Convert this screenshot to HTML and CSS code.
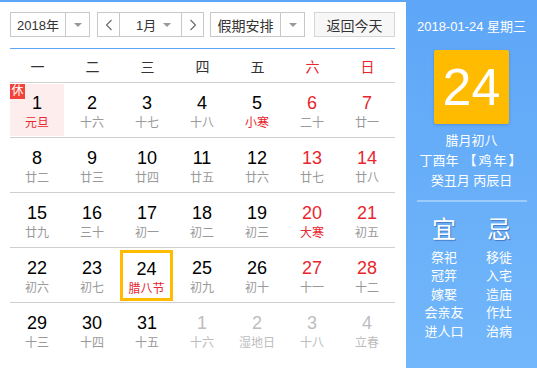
FILE: index.html
```html
<!doctype html>
<html lang="zh-CN">
  <head>
    <meta charset="utf-8" />
    <title>万年历</title>
    <link rel="stylesheet" href="styles.css">
  </head>
  <body>
    <div class="calendar">
      <div class="main">
        <div class="toolbar">
          <div class="select year">
            <span class="select-text">2018年</span>
            <span class="select-arrow"><i class="caret"></i></span>
          </div>
          <div class="month-group">
            <span class="nav"><svg width="8" height="12" viewBox="0 0 8 12"><polyline points="6.5,1 1.5,6 6.5,11" fill="none" stroke="#666" stroke-width="1.1"/></svg></span>
            <span class="month">
              <span class="select-text">1月</span>
              <i class="caret"></i>
            </span>
            <span class="nav"><svg width="8" height="12" viewBox="0 0 8 12"><polyline points="1.5,1 6.5,6 1.5,11" fill="none" stroke="#666" stroke-width="1.1"/></svg></span>
          </div>
          <div class="select holiday">
            <span class="select-text">假期安排</span>
            <span class="select-arrow"><i class="caret"></i></span>
          </div>
          <button class="today-btn">返回今天</button>
        </div>

        <div class="weekdays">
          <span>一</span><span>二</span><span>三</span><span>四</span><span>五</span>
          <span class="red">六</span><span class="red">日</span>
        </div>

        <div class="week">
          <div class="day rest"><span class="badge">休</span><b>1</b><em class="term">元旦</em></div>
          <div class="day"><b>2</b><em>十六</em></div>
          <div class="day"><b>3</b><em>十七</em></div>
          <div class="day"><b>4</b><em>十八</em></div>
          <div class="day"><b>5</b><em class="term">小寒</em></div>
          <div class="day weekend"><b>6</b><em>二十</em></div>
          <div class="day weekend"><b>7</b><em>廿一</em></div>
        </div>
        <div class="week">
          <div class="day"><b>8</b><em>廿二</em></div>
          <div class="day"><b>9</b><em>廿三</em></div>
          <div class="day"><b>10</b><em>廿四</em></div>
          <div class="day"><b>11</b><em>廿五</em></div>
          <div class="day"><b>12</b><em>廿六</em></div>
          <div class="day weekend"><b>13</b><em>廿七</em></div>
          <div class="day weekend"><b>14</b><em>廿八</em></div>
        </div>
        <div class="week">
          <div class="day"><b>15</b><em>廿九</em></div>
          <div class="day"><b>16</b><em>三十</em></div>
          <div class="day"><b>17</b><em>初一</em></div>
          <div class="day"><b>18</b><em>初二</em></div>
          <div class="day"><b>19</b><em>初三</em></div>
          <div class="day weekend"><b>20</b><em class="term">大寒</em></div>
          <div class="day weekend"><b>21</b><em>初五</em></div>
        </div>
        <div class="week">
          <div class="day"><b>22</b><em>初六</em></div>
          <div class="day"><b>23</b><em>初七</em></div>
          <div class="day today"><b>24</b><em class="term">腊八节</em></div>
          <div class="day"><b>25</b><em>初九</em></div>
          <div class="day"><b>26</b><em>初十</em></div>
          <div class="day weekend"><b>27</b><em>十一</em></div>
          <div class="day weekend"><b>28</b><em>十二</em></div>
        </div>
        <div class="week last">
          <div class="day"><b>29</b><em>十三</em></div>
          <div class="day"><b>30</b><em>十四</em></div>
          <div class="day"><b>31</b><em>十五</em></div>
          <div class="day other"><b>1</b><em>十六</em></div>
          <div class="day other"><b>2</b><em>湿地日</em></div>
          <div class="day other"><b>3</b><em>十八</em></div>
          <div class="day other"><b>4</b><em>立春</em></div>
        </div>
      </div>

      <aside class="side">
        <div class="side-date">2018-01-24 星期三</div>
        <div class="big-day">24</div>
        <div class="lunar">
          <p>腊月初八</p>
          <p>丁酉年<span class="zodiac">【鸡年】</span></p>
          <p>癸丑月 丙辰日</p>
        </div>
        <hr class="divider" />
        <div class="almanac">
          <ul>
            <li class="head">宜</li>
            <li>祭祀</li>
            <li>冠笄</li>
            <li>嫁娶</li>
            <li>会亲友</li>
            <li>进人口</li>
          </ul>
          <ul>
            <li class="head">忌</li>
            <li>移徙</li>
            <li>入宅</li>
            <li>造庙</li>
            <li>作灶</li>
            <li>治病</li>
          </ul>
        </div>
      </aside>
    </div>
  </body>
</html>
```

FILE: styles.css
```css
*, *::before, *::after {
  box-sizing: border-box;
}

html, body {
  margin: 0;
  padding: 0;
}

body {
  font-family: "Liberation Sans", "Noto Sans CJK SC", sans-serif;
  color: #333;
  background: #fff;
}

.calendar {
  display: flex;
  width: 537px;
  height: 368px;
}

.main {
  width: 406px;
  padding: 10px 11px 0 10px;
  border-top: 2px solid #5ea6f7;
}

/* toolbar */
.toolbar {
  display: flex;
  height: 25px;
  font-size: 13px;
}

.select,
.month-group {
  display: flex;
  border: 1px solid #c8c8c8;
  background: #fff;
}

.select-text {
  display: flex;
  align-items: center;
  justify-content: center;
}

.select-arrow {
  display: flex;
  align-items: center;
  justify-content: center;
  width: 24px;
  border-left: 1px solid #c8c8c8;
}

.caret {
  display: block;
  width: 0;
  height: 0;
  border-left: 4px solid transparent;
  border-right: 4px solid transparent;
  border-top: 4px solid #999;
}

.year {
  width: 80px;
}

.year .select-text {
  flex: 1;
}

.month-group {
  margin-left: 7px;
  width: 107px;
}

.nav {
  display: flex;
  align-items: center;
  justify-content: center;
  width: 22px;
}

.nav:first-child {
  border-right: 1px solid #c8c8c8;
}

.nav:last-child {
  border-left: 1px solid #c8c8c8;
}

.month {
  flex: 1;
  display: flex;
  align-items: center;
  padding: 0 10px 0 16px;
  justify-content: space-between;
}

.holiday {
  margin-left: 6px;
  width: 95px;
  color: #333;
}

.holiday .select-text {
  flex: 1;
  font-size: 14px;
}

.today-btn {
  margin-left: 9px;
  width: 81px;
  height: 25px;
  padding: 0;
  border: 1px solid #d6d6d6;
  background: #f7f7f7;
  font: inherit;
  font-size: 14px;
  color: #333;
}

/* grid */
.weekdays {
  display: grid;
  grid-template-columns: repeat(7, 55px);
  margin-top: 11px;
  border-top: 1px solid #5ea6f7;
  border-bottom: 1px solid #cfcfcf;
  height: 35px;
  align-items: center;
  font-size: 14px;
  text-align: center;
  color: #333;
}

.weekdays .red,
.day.weekend b {
  color: #e8262d;
}

.week {
  display: grid;
  grid-template-columns: repeat(7, 55px);
  border-bottom: 1px solid #cfcfcf;
  height: 55px;
  padding-top: 1px;
}

.week.last {
  border-bottom: 0;
}

.day {
  position: relative;
  width: 54px;
  height: 52px;
  display: flex;
  flex-direction: column;
  align-items: center;
  padding-top: 9px;
}

.day b {
  font-weight: normal;
  font-size: 18px;
  line-height: 21px;
  color: #000;
}

.day em {
  font-style: normal;
  font-size: 12px;
  line-height: 18px;
  color: #999;
}

.day em.term {
  color: #e8262d;
}

.day.rest {
  background: #fdeeed;
}

.badge {
  position: absolute;
  left: 0;
  top: 0;
  width: 15px;
  height: 15px;
  background: #f2433b;
  color: #fff;
  font-size: 12px;
  line-height: 15px;
  text-align: center;
}

.day.today {
  width: 53px;
  height: 51px;
  margin-top: 1px;
  border: 3px solid #ffbb00;
  padding-top: 6px;
}

.day.other b,
.day.other em {
  color: #bdbdbd;
}

/* side panel */
.side {
  width: 131px;
  background: linear-gradient(#5ea6f7, #72b7fb);
  color: #fff;
  display: flex;
  flex-direction: column;
  align-items: center;
  padding-top: 18px;
}

.side-date {
  font-size: 13px;
  line-height: 18px;
}

.big-day {
  margin-top: 14px;
  width: 75px;
  height: 74px;
  background: #ffbb00;
  border-radius: 2px;
  box-shadow: 0 1px 3px rgba(40, 90, 160, 0.35);
  font-size: 52px;
  line-height: 74px;
  text-align: center;
}

.lunar {
  margin-top: 7px;
  font-size: 13px;
  text-align: center;
}

.lunar p {
  margin: 0;
  line-height: 20px;
}

.zodiac {
  margin-left: 5px;
  letter-spacing: 2px;
}

.divider {
  width: 110px;
  margin: 9px 0 0;
  border: 0;
  height: 2px;
  background: rgba(255, 255, 255, 0.35);
}

.almanac {
  display: flex;
  gap: 13px;
  margin-top: 15px;
}

.almanac ul {
  margin: 0;
  padding: 0;
  list-style: none;
  width: 42px;
  text-align: center;
}

.almanac li {
  font-size: 13px;
  line-height: 18.4px;
  white-space: nowrap;
}

.almanac li.head {
  font-size: 24px;
  line-height: 26px;
  margin-bottom: 6px;
  text-shadow: 1px 1px 1px rgba(30, 70, 140, 0.5);
}
```
